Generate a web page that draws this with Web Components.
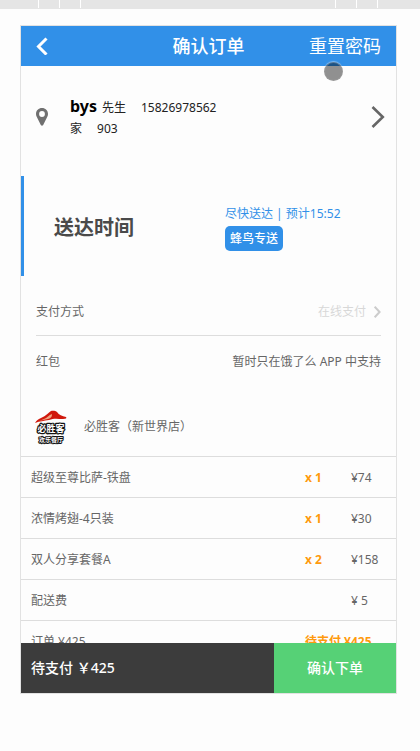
<!DOCTYPE html>
<html lang="zh-CN">
<head>
<meta charset="utf-8">
<meta name="viewport" content="width=device-width, initial-scale=1">
<title>确认订单</title>
<style>
  html { height: 100%; }
  body {
    margin: 0;
    height: 100%;
    background: #fdfdfd;
    color: #666;
    font: 12px/20px "Noto Sans", "Noto Sans CJK SC", sans-serif;
    --blue: #3190e8;
    --line: #ddd;
    --orange: #ff9a0d;
  }
</style>
</head>
<body>
<device-stage>
  <top-bar slot="header" heading="确认订单" action="重置密码"></top-bar>
  <address-card person="bys" honorific="先生" phone="15826978562" place="家" room="903"></address-card>
  <delivery-time eta="尽快送达 | 预计15:52" badge="蜂鸟专送">送达时间</delivery-time>
  <pay-options>
    <option-row label="支付方式" link>在线支付</option-row>
    <option-row label="红包">暂时只在饿了么 APP 中支持</option-row>
  </pay-options>
  <shop-title>必胜客（新世界店）</shop-title>
  <order-table></order-table>
  <pay-bar slot="footer" action="确认下单">待支付 ￥425</pay-bar>
  <touch-point slot="pointer"></touch-point>
</device-stage>

<script>
const define = (name, render) => customElements.define(name, class extends HTMLElement {
  constructor() { super(); this.attachShadow({ mode: 'open' }); }
  connectedCallback() {
    const t = document.createElement('template');
    t.innerHTML = render(this);
    this.shadowRoot.replaceChildren(t.content.cloneNode(true));
  }
});
const a = (el, n) => el.getAttribute(n) || '';

define('ruler-bar', () => `
  <style>
    :host { display: flex; justify-content: space-between; height: 9px; background: #e5e5e5; padding: 0 42px 0 38px; }
    div { display: flex; gap: 20px; height: 8px; }
    i { width: 1px; background: #fff; }
  </style>
  <div><i></i><i></i><i></i></div><div><i></i><i></i><i></i></div>`);

define('device-stage', () => `
  <style>
    :host { display: flex; flex-direction: column; height: 100%; min-height: 400px; }
    .screen { position: relative; flex: 1; min-height: 0; display: flex; flex-direction: column; margin: 16px 23px 57px 20px; border: 1px solid #e2e2e2; }
    main { flex: 1; min-height: 0; overflow-y: auto; scrollbar-width: none; }
  </style>
  <ruler-bar></ruler-bar>
  <div class="screen">
    <slot name="header"></slot>
    <main><slot></slot></main>
    <slot name="footer"></slot>
    <slot name="pointer"></slot>
  </div>`);

define('top-bar', el => `
  <style>
    :host { display: grid; grid-template-columns: 1fr auto 1fr; align-items: center; height: 40px; padding: 0 15px; background: var(--blue); color: #fff; font-size: 18px; flex: none; }
    h1 { margin: 0; font: inherit; font-weight: 500; }
    button { justify-self: start; display: flex; padding: 0; border: 0; background: none; color: inherit; }
    a { justify-self: end; color: inherit; text-decoration: none; }
  </style>
  <button type="button" aria-label="返回"><svg width="12" height="18" viewBox="0 0 12 18" fill="none" stroke="currentColor" stroke-width="3"><path d="M10.5 1.5 2.5 9.5l8 8"/></svg></button>
  <h1>${a(el, 'heading')}</h1>
  <a href="#reset">${a(el, 'action')}</a>`);

define('address-card', el => `
  <style>
    :host { display: flex; align-items: center; height: 110px; box-sizing: border-box; padding: 0 11px 8px 15px; color: #222; }
    .pin { flex: none; margin-right: 22px; }
    .text { flex: 1; }
    p { margin: 0; line-height: 21px; display: flex; align-items: baseline; gap: 15px; }
    strong { font-size: 16px; color: #000; margin-right: 5px; }
    .go { flex: none; }
    svg { display: block; }
  </style>
  <svg class="pin" width="12" height="18" viewBox="0 0 12 18"><path fill="#707070" fill-rule="evenodd" d="M6 0C2.600 0 0 2.600 0 5.900 0 7 .3 7.900.7 8.700L4.800 17.100Q6 18.600 7.200 17.100L11.300 8.700C11.700 7.900 12 7 12 5.900 12 2.600 9.400 0 6 0ZM6 3.100A2.900 2.900 0 1 1 6 8.900 2.900 2.900 0 0 1 6 3.100Z"/></svg>
  <div class="text">
    <p><span><strong>${a(el, 'person')}</strong>${a(el, 'honorific')}</span><span>${a(el, 'phone')}</span></p>
    <p><span>${a(el, 'place')}</span><span>${a(el, 'room')}</span></p>
  </div>
  <svg class="go" width="14" height="22" viewBox="0 0 14 22" fill="none" stroke="#666" stroke-width="2.600"><path d="M1.500 1 11.800 11 1.500 21"/></svg>`);

define('delivery-time', el => `
  <style>
    :host { display: grid; grid-template-columns: 171fr 171fr; align-items: center; height: 100px; box-sizing: border-box; padding: 3px 0 0 30px; border-left: 3px solid var(--blue); }
    h2 { margin: 0; font-size: 20px; line-height: 30px; color: #4a4a4a; }
    .eta { color: var(--blue); display: flex; flex-direction: column; align-items: flex-start; gap: 2px; }
    .badge { padding: 0 5px; line-height: 25px; border-radius: 5px; background: var(--blue); color: #fff; font-weight: 500; }
  </style>
  <h2><slot></slot></h2>
  <div class="eta"><span>${a(el, 'eta')}</span><span class="badge">${a(el, 'badge')}</span></div>`);

define('pay-options', () => `
  <style>
    :host { display: block; padding: 10px 15px 0; }
  </style>
  <slot></slot>`);

define('option-row', el => `
  <style>
    :host { display: flex; justify-content: space-between; align-items: center; height: 51px; }
    :host([link]) { height: 47px; padding-top: 2px; border-bottom: 1px solid var(--line); }
    a { display: flex; align-items: center; gap: 8px; color: #d8d8d8; text-decoration: none; }
  </style>
  <span>${a(el, 'label')}</span>
  ${el.hasAttribute('link')
    ? `<a href="#pay"><slot></slot><svg width="7" height="12" viewBox="0 0 7 12" fill="none" stroke="#ccc" stroke-width="2"><path d="M.7.700 5.600 6 .7 11.300"/></svg></a>`
    : `<span><slot></slot></span>`}`);

define('shop-title', () => `
  <style>
    :host { display: flex; align-items: center; gap: 17px; height: 69px; box-sizing: border-box; padding: 10px 14px 0; }
    svg { flex: none; width: 32px; height: 32px; overflow: visible; }
    text { font-family: "Noto Sans CJK SC", sans-serif; font-weight: 700; fill: #fff; stroke: #111; paint-order: stroke; stroke-linejoin: round; text-anchor: middle; }
  </style>
  <svg viewBox="0 0 32 32">
    <path d="M0 12C3 7 8 7 11 4c2-1 3-3 5-4 2-.6 5 0 6 1 2 3 5 4 9 5 1 1 0 2-3 2-5 0-9-1-14 1-5 1-9 1-14 3Z" fill="#d0180c"/>
    <path d="M9 8c3-1 5-4 8-5 0 3-1 4-4 5Q8 9 4 10Z" fill="#f0a582"/>
    <text x="16" y="21" font-size="9" stroke-width="2.400">必胜客</text>
    <text x="16" y="31" font-size="6" stroke-width="2">欢乐餐厅</text>
  </svg>
  <span><slot></slot></span>`);

const items = [
  ['超级至尊比萨-铁盘', 'x 1', '¥74'],
  ['浓情烤翅-4只装', 'x 1', '¥30'],
  ['双人分享套餐A', 'x 2', '¥158'],
  ['配送费', '', '¥ 5']
];
define('order-table', () => `
  <style>
    :host { display: block; }
    table { width: 100%; border-collapse: collapse; table-layout: fixed; }
    td, th { height: 38px; padding: 2px 0 0; border-top: 1px solid var(--line); text-align: left; font-weight: 400; }
    th { padding-left: 10px; }
    .qty { width: 46px; color: var(--orange); font-weight: 700; }
    .price { width: 45px; }
  </style>
  <table>
    <colgroup><col><col class="qty"><col class="price"></colgroup>
    <tbody>
      ${items.map(([n, q, p]) => `<tr><th scope="row">${n}</th><td class="qty">${q}</td><td>${p}</td></tr>`).join('')}
      <tr><th scope="row">订单 ¥425</th><td class="qty" colspan="2">待支付 ¥425</td></tr>
    </tbody>
  </table>`);

define('pay-bar', el => `
  <style>
    :host { display: flex; flex: none; height: 50px; background: #3c3c3c; color: #fff; font-size: 14px; font-weight: 500; }
    span { flex: 1; padding-left: 10px; line-height: 50px; }
    button { width: 122px; padding: 0; border: 0; background: #56d176; color: #fff; font: inherit; }
  </style>
  <span><slot></slot></span><button type="button">${a(el, 'action')}</button>`);

define('touch-point', () => `
  <style>
    :host { position: absolute; top: 36px; right: 53px; width: 19px; height: 19px; box-sizing: border-box; border-radius: 50%; background: rgba(0,0,0,.43); border: 1px solid rgba(160,160,160,.5); box-shadow: 0 -1px 1px rgba(255,255,255,.4); pointer-events: none; }
  </style>`);
</script>
</body>
</html>
